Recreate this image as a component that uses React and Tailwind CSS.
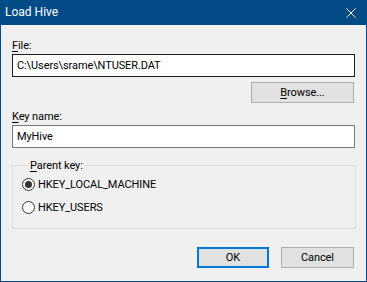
import React from 'react';

const Radio = ({ checked, label }) => (
  <div className="flex items-center h-[23px]">
    <span className="w-[13px] h-[13px] rounded-full border border-[#333333] bg-white flex items-center justify-center">
      {checked && <span className="w-[7px] h-[7px] rounded-full bg-[#333333]" />}
    </span>
    <span className="ml-[3px]">{label}</span>
  </div>
);

const Button = ({ children, primary, className = '' }) => (
  <button
    className={`h-[21px] bg-[#e1e1e1] flex items-center justify-center ${
      primary ? 'border-2 border-[#0078d7]' : 'border border-[#adadad]'
    } ${className}`}
  >
    {children}
  </button>
);

export default function App() {
  return (
    <div className="w-[367px] h-[282px] flex flex-col bg-[#f0f0f0] border border-t-0 border-[#034b86] text-[11px] leading-[15px] tracking-[-0.1px] text-black font-['Roboto',sans-serif]">
      {/* title bar */}
      <div className="h-[25px] -mx-px bg-[#034b86] flex items-center justify-between pl-[5px] pr-[11px] text-white">
        <span className="text-[12px] tracking-normal">Load Hive</span>
        <svg width="10" height="10" viewBox="0 0 10 10" className="mt-px">
          <path d="M0.5 0.5L9.5 9.5M9.5 0.5L0.5 9.5" stroke="white" strokeWidth="1" />
        </svg>
      </div>

      <div className="flex flex-col px-[11px]">
        <div className="mt-[13px] h-[15px]">
          <u className="underline-offset-2">F</u>ile:
        </div>
        <div className="mt-[1px] h-[23px] border border-[#1e1e1e] bg-white flex items-center pl-[4px]">
          C:\Users\srame\NTUSER.DAT
        </div>
        <div className="flex justify-end mt-[5px] pr-px">
          <Button className="w-[103px]">
            <span><u className="underline-offset-2">B</u>rowse...</span>
          </Button>
        </div>
        <div className="mt-[6px] h-[15px]">
          <u className="underline-offset-2">K</u>ey name:
        </div>
        <div className="mt-[1px] h-[23px] border border-[#7a7a7a] bg-white flex items-center pl-[4px]">
          MyHive
        </div>

        <fieldset className="mt-[11px] border border-[#dcdcdc] pl-[9px] pb-[9px] mr-[-1px]">
          <legend className="ml-[7px] px-[1px] leading-[13px]">
            <u className="underline-offset-2">P</u>arent key:
          </legend>
          <div className="mt-[1px]">
            <Radio checked label="HKEY_LOCAL_MACHINE" />
            <Radio label="HKEY_USERS" />
          </div>
        </fieldset>

        <div className="flex justify-end gap-[12px] mt-[18px] pr-px">
          <Button primary className="w-[72px]">OK</Button>
          <Button className="w-[73px]">Cancel</Button>
        </div>
      </div>
    </div>
  );
}
